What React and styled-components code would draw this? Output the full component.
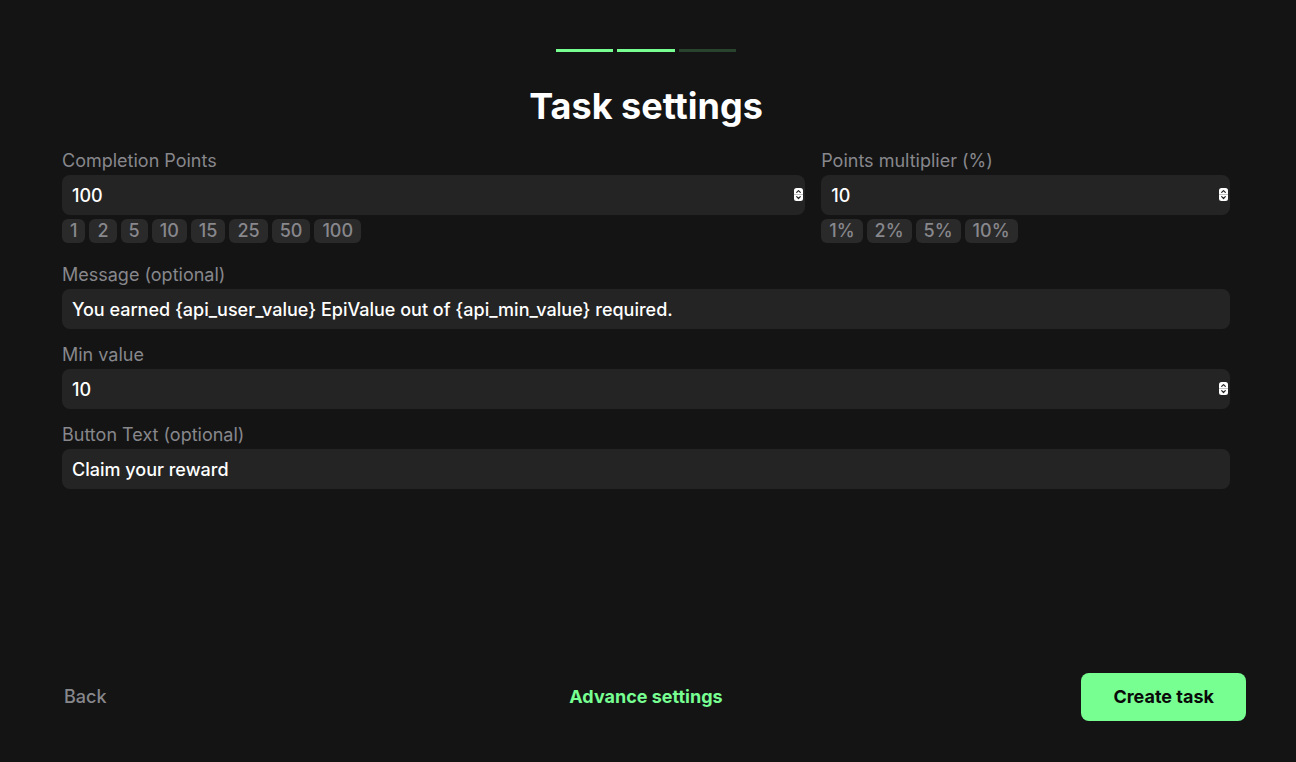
import React, { useState } from "react";
import styled, { createGlobalStyle } from "styled-components";

const GlobalStyle = createGlobalStyle`
  * {
    box-sizing: border-box;
  }
  body {
    margin: 0;
    background: #141414;
    font-family: "Inter", sans-serif;
    font-feature-settings: "calt" 0;
    -webkit-font-smoothing: antialiased;
  }
  button,
  input {
    font-family: inherit;
    font-feature-settings: inherit;
  }
`;
const Page = styled.form`
  display: flex;
  flex-flow: column nowrap;
  align-items: center;
  min-height: 100vh;
  padding: 49px 50px 41px 46px;
  background: #141414;
  color: white;
`;
const Steps = styled.div`
  display: flex;
  gap: 4px;
  width: 180px;
`;
const Step = styled.div`
  flex: 1;
  height: 3px;
  background: ${(props) => (props.$done ? "#77ff92" : "#28432e")};
`;
const Title = styled.h1`
  margin: 32px 0 19px;
  font-size: 36px;
  line-height: 44px;
  font-weight: 700;
`;
const Fields = styled.div`
  display: flex;
  flex-flow: column nowrap;
  gap: 12px;
  width: 100%;
  max-width: 1200px;
  padding: 0 16px;
`;
const PointsRow = styled.div`
  display: grid;
  grid-template-columns: 20fr 11fr;
  gap: 16px;
  margin-bottom: 6px;
`;
const FieldBox = styled.div`
  display: flex;
  flex-flow: column nowrap;
  min-width: 0;
`;
const Label = styled.label`
  font-size: 18px;
  line-height: 28px;
  color: #87878c;
`;
const InputWrap = styled.div`
  position: relative;
  display: flex;
`;
const Input = styled.input`
  width: 100%;
  height: 40px;
  padding: 0 10px;
  border: none;
  border-radius: 8px;
  outline: none;
  background: #242424;
  color: white;
  font-size: 18px;
  font-weight: 500;
  appearance: textfield;
  &::-webkit-inner-spin-button {
    appearance: none;
    margin: 0;
  }
`;
const Spinner = styled.svg`
  position: absolute;
  top: 13px;
  right: 2px;
  width: 9px;
  height: 13px;
  pointer-events: none;
`;
const Chips = styled.div`
  display: flex;
  flex-wrap: wrap;
  gap: 4px;
  margin-top: 4px;
`;
const Chip = styled.button`
  height: 24px;
  padding: 0 8px;
  border: none;
  border-radius: 6px;
  background: #2a2a2a;
  color: #87878c;
  font-size: 18px;
  line-height: 24px;
  font-weight: 500;
  cursor: pointer;
`;
const Footer = styled.div`
  display: grid;
  grid-template-columns: 1fr auto 1fr;
  align-items: center;
  width: 100%;
  max-width: 1200px;
  margin-top: auto;
`;
const TextButton = styled.button`
  justify-self: start;
  height: 48px;
  padding: 0 18px 2px;
  border: none;
  background: none;
  color: ${(props) => (props.$accent ? "#77ff92" : "#87878c")};
  font-size: 18px;
  font-weight: ${(props) => (props.$accent ? 700 : 500)};
  cursor: pointer;
`;
const CreateButton = styled.button`
  justify-self: end;
  height: 48px;
  padding: 0 32px 2px;
  border: none;
  border-radius: 8px;
  background: #77ff92;
  color: #0a0a0a;
  font-size: 18px;
  font-weight: 700;
  cursor: pointer;
`;

const steps = [true, true, false];
const pointPresets = [1, 2, 5, 10, 15, 25, 50, 100];
const multiplierPresets = [1, 2, 5, 10];

function Field({ id, label, type = "text", value, onChange, children }) {
  return (
    <FieldBox>
      <Label htmlFor={id}>{label}</Label>
      <InputWrap>
        <Input
          id={id}
          type={type}
          value={value}
          onChange={(e) => onChange(e.target.value)}
        />
        {type === "number" && (
          <Spinner viewBox="0 0 9 13" aria-hidden="true">
            <rect width="9" height="13" rx="2.5" fill="#ffffff" />
            <path d="M0 6.5h9" stroke="#c4c4c4" strokeWidth="1" />
            <path
              d="M2.7 4.4 4.5 2.6l1.8 1.8M2.7 8.7l1.8 1.8 1.8-1.8"
              fill="none"
              stroke="#242424"
              strokeWidth="1.2"
              strokeLinecap="round"
              strokeLinejoin="round"
            />
          </Spinner>
        )}
      </InputWrap>
      {children}
    </FieldBox>
  );
}

export default function App() {
  const [points, setPoints] = useState("100");
  const [multiplier, setMultiplier] = useState("10");
  const [message, setMessage] = useState(
    "You earned {api_user_value} EpiValue out of {api_min_value} required."
  );
  const [minValue, setMinValue] = useState("10");
  const [buttonText, setButtonText] = useState("Claim your reward");

  return (
    <>
      <GlobalStyle />
      <Page onSubmit={(e) => e.preventDefault()}>
        <Steps>
          {steps.map((done, i) => (
            <Step key={i} $done={done} />
          ))}
        </Steps>
        <Title>Task settings</Title>
        <Fields>
          <PointsRow>
            <Field
              id="points"
              label="Completion Points"
              type="number"
              value={points}
              onChange={setPoints}
            >
              <Chips>
                {pointPresets.map((n) => (
                  <Chip key={n} type="button" onClick={() => setPoints(String(n))}>
                    {n}
                  </Chip>
                ))}
              </Chips>
            </Field>
            <Field
              id="multiplier"
              label="Points multiplier (%)"
              type="number"
              value={multiplier}
              onChange={setMultiplier}
            >
              <Chips>
                {multiplierPresets.map((n) => (
                  <Chip key={n} type="button" onClick={() => setMultiplier(String(n))}>
                    {`${n}%`}
                  </Chip>
                ))}
              </Chips>
            </Field>
          </PointsRow>
          <Field
            id="message"
            label="Message (optional)"
            value={message}
            onChange={setMessage}
          />
          <Field
            id="min-value"
            label="Min value"
            type="number"
            value={minValue}
            onChange={setMinValue}
          />
          <Field
            id="button-text"
            label="Button Text (optional)"
            value={buttonText}
            onChange={setButtonText}
          />
        </Fields>
        <Footer>
          <TextButton type="button">Back</TextButton>
          <TextButton type="button" $accent>
            Advance settings
          </TextButton>
          <CreateButton type="submit">Create task</CreateButton>
        </Footer>
      </Page>
    </>
  );
}
